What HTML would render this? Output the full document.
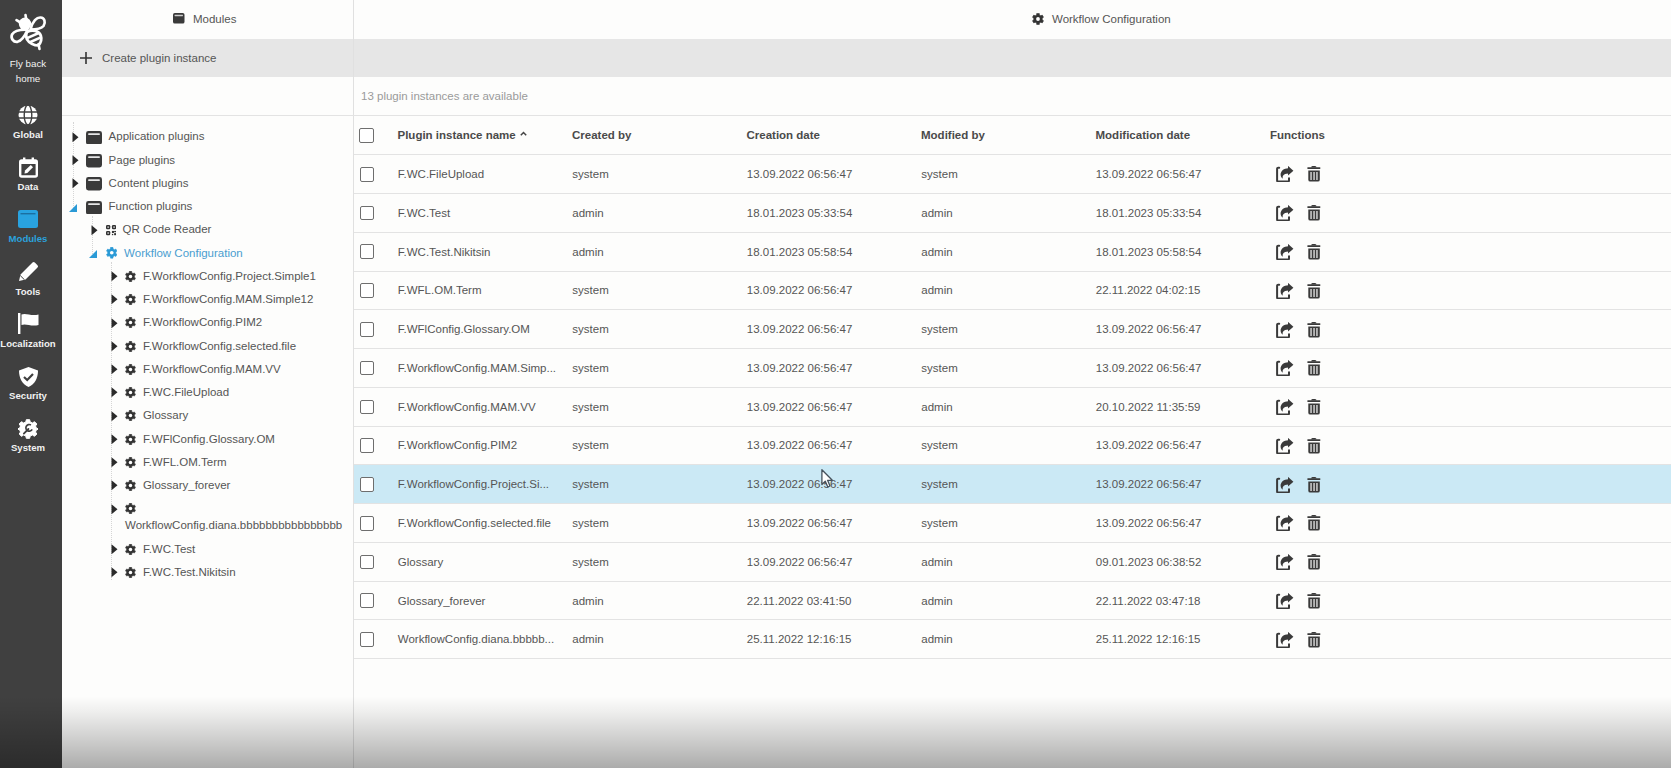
<!DOCTYPE html><html><head><meta charset="utf-8"><style>
*{margin:0;padding:0;box-sizing:border-box}
html,body{width:1671px;height:768px;overflow:hidden;background:#fdfdfc;font-family:"Liberation Sans",sans-serif;font-size:11.5px;color:#555}
.a{position:absolute}
.t{position:absolute;white-space:nowrap;line-height:14px}
#side{position:absolute;left:0;top:0;width:62px;height:768px;background:#404040}
.sl{position:absolute;left:0;width:56px;text-align:center;color:#f2f2f2;font-weight:bold;font-size:9.6px;line-height:12px;white-space:nowrap}
.hl{position:absolute;height:1px;background:#e3e3e3}
.cb{position:absolute;width:14.5px;height:14.8px;border:1.8px solid #6e6e6e;border-radius:2px;background:#fff}
.th{font-weight:bold;color:#4a4a4a}
svg{display:block}
</style></head><body>

<div id="side">
<svg class="a" style="left:5px;top:8px" width="48" height="48" viewBox="0 0 48 48">
<defs><clipPath id="bc"><path d="M22 24 C 27 21.5, 34 22.5, 35.8 27.5 C 37 31, 36 34.5, 33.5 37.5 C 29 37.5, 24 35, 21.8 31 C 20.8 28.5, 20.8 26, 22 24Z"/></clipPath></defs>
<g fill="none" stroke="#fff" stroke-width="2.7" stroke-linejoin="round">
<path d="M25.5 21.5 C 27.5 13, 32 9.2, 35.5 9.5 C 39.5 9.8, 41 14, 38.5 18 C 36 21, 30 21.5, 25.5 21.5 Z"/>
<path d="M22.5 21.8 C 16 21.5, 9.5 22.5, 7 26.5 C 5.5 30.5, 8.5 34.5, 12.5 33.8 C 16 33, 19.5 29, 22.5 21.8 Z"/>
<path d="M22 24 C 27 21.5, 34 22.5, 35.8 27.5 C 37 31, 36 34.5, 33.5 37.5 C 29 37.5, 24 35, 21.8 31 C 20.8 28.5, 20.8 26, 22 24Z"/>
</g>
<g clip-path="url(#bc)" stroke="#fff" stroke-width="2.6"><path d="M20 31 L37 23.5"/><path d="M22 35.5 L38 28.5"/></g>
<path d="M33.5 36 L34.5 41" stroke="#fff" stroke-width="2.6" stroke-linecap="round"/>
<circle cx="20" cy="15.8" r="6.2" fill="#fff"/>
<path d="M20.5 7 L21.2 11 M11.5 12.2 L15.5 14.5" stroke="#fff" stroke-width="2.6" stroke-linecap="round"/>
</svg>
<div class="sl" style="top:57.8px;font-weight:normal;font-size:9.8px">Fly back</div><div class="sl" style="top:72.5px;font-weight:normal;font-size:9.8px">home</div>
<svg class="a" style="left:18px;top:105px" width="20" height="20" viewBox="0 0 20 20"><circle cx="10" cy="10" r="9.5" fill="#fff"/><g stroke="#404040" stroke-width="1.4" fill="none"><path d="M0 7H20M0 13H20"/><ellipse cx="10" cy="10" rx="3.8" ry="10"/></g></svg>
<div class="sl" style="top:129px">Global</div>
<svg class="a" style="left:19px;top:157px" width="19" height="21" viewBox="0 0 19 21"><rect x="1.2" y="3.5" width="16.6" height="16" rx="1.5" fill="none" stroke="#fff" stroke-width="2.4"/><rect x="1" y="3" width="17" height="4" fill="#fff"/><rect x="4" y="0.5" width="2.4" height="4" fill="#fff"/><rect x="12.6" y="0.5" width="2.4" height="4" fill="#fff"/><path d="M5.5 16.5L6 13.5L11.8 8L14 10.2L8.3 16z" fill="#fff"/></svg>
<div class="sl" style="top:181px">Data</div>
<svg class="a" style="left:18px;top:210px" width="20" height="18" viewBox="0 0 20 18"><rect x="0" y="0" width="20" height="18" rx="2.5" fill="#29a3e0"/><rect x="2.5" y="3" width="15" height="1.4" fill="#1b6fa0"/></svg>
<div class="sl" style="top:233px;color:#2ba2dd">Modules</div>
<svg class="a" style="left:18px;top:261px" width="21" height="21" viewBox="0 0 21 21"><path d="M1 20L2.5 13.5L14.5 1.5A1.6 1.6 0 0 1 16.8 1.5L19.5 4.2A1.6 1.6 0 0 1 19.5 6.5L7.5 18.5z" fill="#fff"/><path d="M2.2 14.5L6.5 18.8" stroke="#404040" stroke-width="1"/></svg>
<div class="sl" style="top:286px">Tools</div>
<svg class="a" style="left:18px;top:313px" width="21" height="21" viewBox="0 0 21 21"><rect x="0" y="0" width="2.4" height="21" fill="#fff"/><path d="M3.5 1.5C8 -0.5 13 3.5 20.5 1.5V12C13 14 8 10 3.5 12z" fill="#fff"/></svg>
<div class="sl" style="top:338px">Localization</div>
<svg class="a" style="left:19px;top:367px" width="19" height="20" viewBox="0 0 19 20"><path d="M9.5 0L19 3.5C19 11 16 17 9.5 20C3 17 0 11 0 3.5z" fill="#fff"/><path d="M5 10L8.2 13L14 7" fill="none" stroke="#404040" stroke-width="2.2"/></svg>
<div class="sl" style="top:390px">Security</div>
<svg class="a" style="left:18px;top:419px" width="20" height="20" viewBox="0 0 24 24"><path fill="#fff" stroke="#fff" stroke-width="1.2" stroke-linejoin="round" d="M10 0.8H14L14.6 3.6L17.4 4.8L19.8 3.2L22.6 6L21 8.4L22.2 11.2L25 11.8V12.2L22.2 12.8L21 15.6L22.6 18L19.8 20.8L17.4 19.2L14.6 20.4L14 23.2H10L9.4 20.4L6.6 19.2L4.2 20.8L1.4 18L3 15.6L1.8 12.8L-1 12.2V11.8L1.8 11.2L3 8.4L1.4 6L4.2 3.2L6.6 4.8L9.4 3.6Z"/><path d="M7 17.5L12.5 12" stroke="#404040" stroke-width="2.2" stroke-linecap="round"/><path d="M15.5 7.2A4 4 0 1 0 17 12.5" fill="none" stroke="#404040" stroke-width="2"/></svg>
<div class="sl" style="top:442px">System</div>
</div>
<div class="a" style="left:173.3px;top:13.4px"><svg viewBox="0 0 16 13.5" width="11.5" height="10.5" preserveAspectRatio="none"><rect x="0" y="0" width="16" height="13.5" rx="2.4" fill="#3a3a3a"/><rect x="2.2" y="2.2" width="11.6" height="1.9" rx="0.5" fill="#cfcfcf"/></svg></div>
<div class="t" style="left:193px;top:12px;color:#555">Modules</div>
<div class="a" style="left:1032px;top:13px"><svg class="gear" viewBox="0 0 24 24" width="12" height="12"><path fill="#333" stroke="#333" stroke-width="1.2" stroke-linejoin="round" d="M9.26 3.85L9.49 0.78L14.51 0.78L14.74 3.85L17.69 5.55L20.47 4.22L22.97 8.56L20.43 10.30L20.43 13.70L22.97 15.44L20.47 19.78L17.69 18.45L14.74 20.15L14.51 23.22L9.49 23.22L9.26 20.15L6.31 18.45L3.53 19.78L1.03 15.44L3.57 13.70L3.57 10.30L1.03 8.56L3.53 4.22L6.31 5.55Z"/><circle cx="12" cy="12" r="3.8" fill="#fff"/></svg></div>
<div class="t" style="left:1052px;top:12px;color:#555">Workflow Configuration</div>
<div class="a" style="left:62px;top:39px;width:1609px;height:38px;background:#e6e6e6"></div>
<svg class="a" style="left:80px;top:52px" width="12" height="12" viewBox="0 0 12 12"><path d="M6 0V12M0 6H12" stroke="#333" stroke-width="1.6"/></svg>
<div class="t" style="left:102px;top:51px;color:#555">Create plugin instance</div>
<div class="a" style="left:353px;top:0;width:1px;height:768px;background:#e0e0e0"></div>
<div class="t" style="left:361px;top:89px;color:#9a9a9a">13 plugin instances are available</div>
<div class="hl" style="left:62px;top:115px;width:1609px"></div>
<div class="cb" style="left:359px;top:127.9px"></div>
<div class="t th" style="left:397.5px;top:127.9px">Plugin instance name</div>
<div class="t th" style="left:572.0px;top:127.9px">Created by</div>
<div class="t th" style="left:746.5px;top:127.9px">Creation date</div>
<div class="t th" style="left:921.0px;top:127.9px">Modified by</div>
<div class="t th" style="left:1095.5px;top:127.9px">Modification date</div>
<div class="t th" style="left:1270.0px;top:127.9px">Functions</div>
<svg class="a" style="left:520px;top:130.9px" width="7" height="5" viewBox="0 0 7 5"><path d="M0.8 4.2L3.5 1.5L6.2 4.2" fill="none" stroke="#444" stroke-width="1.5"/></svg>
<div class="hl" style="left:354px;top:192.97px;width:1317px"></div>
<div class="cb" style="left:359.5px;top:166.9px"></div>
<div class="t" style="left:397.8px;top:167.0px">F.WC.FileUpload</div>
<div class="t" style="left:572.3px;top:167.0px">system</div>
<div class="t" style="left:746.8px;top:167.0px">13.09.2022 06:56:47</div>
<div class="t" style="left:921.3px;top:167.0px">system</div>
<div class="t" style="left:1095.8px;top:167.0px">13.09.2022 06:56:47</div>
<div class="a" style="left:1276px;top:166.4px"><svg viewBox="0 0 18 16" width="18" height="16"><path d="M3.2 1.7H2.2A1.1 1.1 0 0 0 1.1 2.8V14.4A1.1 1.1 0 0 0 2.2 15.5H11.9A1.1 1.1 0 0 0 13 14.4V12.3" fill="none" stroke="#3a3a3a" stroke-width="2" stroke-linecap="round"/><path d="M12 -0.1L17.4 4.7L12 9.4z" fill="#3a3a3a"/><path d="M12.3 2.2C7.8 2.2 4.6 5 4.6 8.6C4.6 10.8 5.6 12.2 7 12.7C6.5 11.8 6.5 10.6 7.2 9.6C8 8.3 9.8 7.4 12.3 7.4Z" fill="#3a3a3a"/></svg></div>
<div class="a" style="left:1306.7px;top:166.4px"><svg viewBox="0 0 14 16" width="14" height="16"><path d="M4.2 1.4C4.2 0.3 5 -0.1 6.8 -0.1C8.6 -0.1 9.4 0.3 9.4 1.4z" fill="#3a3a3a"/><rect x="0.3" y="1.2" width="13.1" height="1.7" rx="0.6" fill="#3a3a3a"/><path d="M1.3 4.5H12.8V13.7A1.9 1.9 0 0 1 10.9 15.6H3.2A1.9 1.9 0 0 1 1.3 13.7z" fill="#3a3a3a"/><g fill="#e8e8e8"><rect x="3.4" y="6" width="1.3" height="8"/><rect x="6.4" y="6" width="1.3" height="8"/><rect x="9.3" y="6" width="1.3" height="8"/></g></svg></div>
<div class="hl" style="left:354px;top:231.74px;width:1317px"></div>
<div class="cb" style="left:359.5px;top:205.7px"></div>
<div class="t" style="left:397.8px;top:205.8px">F.WC.Test</div>
<div class="t" style="left:572.3px;top:205.8px">admin</div>
<div class="t" style="left:746.8px;top:205.8px">18.01.2023 05:33:54</div>
<div class="t" style="left:921.3px;top:205.8px">admin</div>
<div class="t" style="left:1095.8px;top:205.8px">18.01.2023 05:33:54</div>
<div class="a" style="left:1276px;top:205.2px"><svg viewBox="0 0 18 16" width="18" height="16"><path d="M3.2 1.7H2.2A1.1 1.1 0 0 0 1.1 2.8V14.4A1.1 1.1 0 0 0 2.2 15.5H11.9A1.1 1.1 0 0 0 13 14.4V12.3" fill="none" stroke="#3a3a3a" stroke-width="2" stroke-linecap="round"/><path d="M12 -0.1L17.4 4.7L12 9.4z" fill="#3a3a3a"/><path d="M12.3 2.2C7.8 2.2 4.6 5 4.6 8.6C4.6 10.8 5.6 12.2 7 12.7C6.5 11.8 6.5 10.6 7.2 9.6C8 8.3 9.8 7.4 12.3 7.4Z" fill="#3a3a3a"/></svg></div>
<div class="a" style="left:1306.7px;top:205.2px"><svg viewBox="0 0 14 16" width="14" height="16"><path d="M4.2 1.4C4.2 0.3 5 -0.1 6.8 -0.1C8.6 -0.1 9.4 0.3 9.4 1.4z" fill="#3a3a3a"/><rect x="0.3" y="1.2" width="13.1" height="1.7" rx="0.6" fill="#3a3a3a"/><path d="M1.3 4.5H12.8V13.7A1.9 1.9 0 0 1 10.9 15.6H3.2A1.9 1.9 0 0 1 1.3 13.7z" fill="#3a3a3a"/><g fill="#e8e8e8"><rect x="3.4" y="6" width="1.3" height="8"/><rect x="6.4" y="6" width="1.3" height="8"/><rect x="9.3" y="6" width="1.3" height="8"/></g></svg></div>
<div class="hl" style="left:354px;top:270.51px;width:1317px"></div>
<div class="cb" style="left:359.5px;top:244.4px"></div>
<div class="t" style="left:397.8px;top:244.5px">F.WC.Test.Nikitsin</div>
<div class="t" style="left:572.3px;top:244.5px">admin</div>
<div class="t" style="left:746.8px;top:244.5px">18.01.2023 05:58:54</div>
<div class="t" style="left:921.3px;top:244.5px">admin</div>
<div class="t" style="left:1095.8px;top:244.5px">18.01.2023 05:58:54</div>
<div class="a" style="left:1276px;top:243.9px"><svg viewBox="0 0 18 16" width="18" height="16"><path d="M3.2 1.7H2.2A1.1 1.1 0 0 0 1.1 2.8V14.4A1.1 1.1 0 0 0 2.2 15.5H11.9A1.1 1.1 0 0 0 13 14.4V12.3" fill="none" stroke="#3a3a3a" stroke-width="2" stroke-linecap="round"/><path d="M12 -0.1L17.4 4.7L12 9.4z" fill="#3a3a3a"/><path d="M12.3 2.2C7.8 2.2 4.6 5 4.6 8.6C4.6 10.8 5.6 12.2 7 12.7C6.5 11.8 6.5 10.6 7.2 9.6C8 8.3 9.8 7.4 12.3 7.4Z" fill="#3a3a3a"/></svg></div>
<div class="a" style="left:1306.7px;top:243.9px"><svg viewBox="0 0 14 16" width="14" height="16"><path d="M4.2 1.4C4.2 0.3 5 -0.1 6.8 -0.1C8.6 -0.1 9.4 0.3 9.4 1.4z" fill="#3a3a3a"/><rect x="0.3" y="1.2" width="13.1" height="1.7" rx="0.6" fill="#3a3a3a"/><path d="M1.3 4.5H12.8V13.7A1.9 1.9 0 0 1 10.9 15.6H3.2A1.9 1.9 0 0 1 1.3 13.7z" fill="#3a3a3a"/><g fill="#e8e8e8"><rect x="3.4" y="6" width="1.3" height="8"/><rect x="6.4" y="6" width="1.3" height="8"/><rect x="9.3" y="6" width="1.3" height="8"/></g></svg></div>
<div class="hl" style="left:354px;top:309.28px;width:1317px"></div>
<div class="cb" style="left:359.5px;top:283.2px"></div>
<div class="t" style="left:397.8px;top:283.3px">F.WFL.OM.Term</div>
<div class="t" style="left:572.3px;top:283.3px">system</div>
<div class="t" style="left:746.8px;top:283.3px">13.09.2022 06:56:47</div>
<div class="t" style="left:921.3px;top:283.3px">admin</div>
<div class="t" style="left:1095.8px;top:283.3px">22.11.2022 04:02:15</div>
<div class="a" style="left:1276px;top:282.7px"><svg viewBox="0 0 18 16" width="18" height="16"><path d="M3.2 1.7H2.2A1.1 1.1 0 0 0 1.1 2.8V14.4A1.1 1.1 0 0 0 2.2 15.5H11.9A1.1 1.1 0 0 0 13 14.4V12.3" fill="none" stroke="#3a3a3a" stroke-width="2" stroke-linecap="round"/><path d="M12 -0.1L17.4 4.7L12 9.4z" fill="#3a3a3a"/><path d="M12.3 2.2C7.8 2.2 4.6 5 4.6 8.6C4.6 10.8 5.6 12.2 7 12.7C6.5 11.8 6.5 10.6 7.2 9.6C8 8.3 9.8 7.4 12.3 7.4Z" fill="#3a3a3a"/></svg></div>
<div class="a" style="left:1306.7px;top:282.7px"><svg viewBox="0 0 14 16" width="14" height="16"><path d="M4.2 1.4C4.2 0.3 5 -0.1 6.8 -0.1C8.6 -0.1 9.4 0.3 9.4 1.4z" fill="#3a3a3a"/><rect x="0.3" y="1.2" width="13.1" height="1.7" rx="0.6" fill="#3a3a3a"/><path d="M1.3 4.5H12.8V13.7A1.9 1.9 0 0 1 10.9 15.6H3.2A1.9 1.9 0 0 1 1.3 13.7z" fill="#3a3a3a"/><g fill="#e8e8e8"><rect x="3.4" y="6" width="1.3" height="8"/><rect x="6.4" y="6" width="1.3" height="8"/><rect x="9.3" y="6" width="1.3" height="8"/></g></svg></div>
<div class="hl" style="left:354px;top:348.05px;width:1317px"></div>
<div class="cb" style="left:359.5px;top:322.0px"></div>
<div class="t" style="left:397.8px;top:322.1px">F.WFlConfig.Glossary.OM</div>
<div class="t" style="left:572.3px;top:322.1px">system</div>
<div class="t" style="left:746.8px;top:322.1px">13.09.2022 06:56:47</div>
<div class="t" style="left:921.3px;top:322.1px">system</div>
<div class="t" style="left:1095.8px;top:322.1px">13.09.2022 06:56:47</div>
<div class="a" style="left:1276px;top:321.5px"><svg viewBox="0 0 18 16" width="18" height="16"><path d="M3.2 1.7H2.2A1.1 1.1 0 0 0 1.1 2.8V14.4A1.1 1.1 0 0 0 2.2 15.5H11.9A1.1 1.1 0 0 0 13 14.4V12.3" fill="none" stroke="#3a3a3a" stroke-width="2" stroke-linecap="round"/><path d="M12 -0.1L17.4 4.7L12 9.4z" fill="#3a3a3a"/><path d="M12.3 2.2C7.8 2.2 4.6 5 4.6 8.6C4.6 10.8 5.6 12.2 7 12.7C6.5 11.8 6.5 10.6 7.2 9.6C8 8.3 9.8 7.4 12.3 7.4Z" fill="#3a3a3a"/></svg></div>
<div class="a" style="left:1306.7px;top:321.5px"><svg viewBox="0 0 14 16" width="14" height="16"><path d="M4.2 1.4C4.2 0.3 5 -0.1 6.8 -0.1C8.6 -0.1 9.4 0.3 9.4 1.4z" fill="#3a3a3a"/><rect x="0.3" y="1.2" width="13.1" height="1.7" rx="0.6" fill="#3a3a3a"/><path d="M1.3 4.5H12.8V13.7A1.9 1.9 0 0 1 10.9 15.6H3.2A1.9 1.9 0 0 1 1.3 13.7z" fill="#3a3a3a"/><g fill="#e8e8e8"><rect x="3.4" y="6" width="1.3" height="8"/><rect x="6.4" y="6" width="1.3" height="8"/><rect x="9.3" y="6" width="1.3" height="8"/></g></svg></div>
<div class="hl" style="left:354px;top:386.82px;width:1317px"></div>
<div class="cb" style="left:359.5px;top:360.7px"></div>
<div class="t" style="left:397.8px;top:360.8px">F.WorkflowConfig.MAM.Simp...</div>
<div class="t" style="left:572.3px;top:360.8px">system</div>
<div class="t" style="left:746.8px;top:360.8px">13.09.2022 06:56:47</div>
<div class="t" style="left:921.3px;top:360.8px">system</div>
<div class="t" style="left:1095.8px;top:360.8px">13.09.2022 06:56:47</div>
<div class="a" style="left:1276px;top:360.2px"><svg viewBox="0 0 18 16" width="18" height="16"><path d="M3.2 1.7H2.2A1.1 1.1 0 0 0 1.1 2.8V14.4A1.1 1.1 0 0 0 2.2 15.5H11.9A1.1 1.1 0 0 0 13 14.4V12.3" fill="none" stroke="#3a3a3a" stroke-width="2" stroke-linecap="round"/><path d="M12 -0.1L17.4 4.7L12 9.4z" fill="#3a3a3a"/><path d="M12.3 2.2C7.8 2.2 4.6 5 4.6 8.6C4.6 10.8 5.6 12.2 7 12.7C6.5 11.8 6.5 10.6 7.2 9.6C8 8.3 9.8 7.4 12.3 7.4Z" fill="#3a3a3a"/></svg></div>
<div class="a" style="left:1306.7px;top:360.2px"><svg viewBox="0 0 14 16" width="14" height="16"><path d="M4.2 1.4C4.2 0.3 5 -0.1 6.8 -0.1C8.6 -0.1 9.4 0.3 9.4 1.4z" fill="#3a3a3a"/><rect x="0.3" y="1.2" width="13.1" height="1.7" rx="0.6" fill="#3a3a3a"/><path d="M1.3 4.5H12.8V13.7A1.9 1.9 0 0 1 10.9 15.6H3.2A1.9 1.9 0 0 1 1.3 13.7z" fill="#3a3a3a"/><g fill="#e8e8e8"><rect x="3.4" y="6" width="1.3" height="8"/><rect x="6.4" y="6" width="1.3" height="8"/><rect x="9.3" y="6" width="1.3" height="8"/></g></svg></div>
<div class="hl" style="left:354px;top:425.59px;width:1317px"></div>
<div class="cb" style="left:359.5px;top:399.5px"></div>
<div class="t" style="left:397.8px;top:399.6px">F.WorkflowConfig.MAM.VV</div>
<div class="t" style="left:572.3px;top:399.6px">system</div>
<div class="t" style="left:746.8px;top:399.6px">13.09.2022 06:56:47</div>
<div class="t" style="left:921.3px;top:399.6px">admin</div>
<div class="t" style="left:1095.8px;top:399.6px">20.10.2022 11:35:59</div>
<div class="a" style="left:1276px;top:399.0px"><svg viewBox="0 0 18 16" width="18" height="16"><path d="M3.2 1.7H2.2A1.1 1.1 0 0 0 1.1 2.8V14.4A1.1 1.1 0 0 0 2.2 15.5H11.9A1.1 1.1 0 0 0 13 14.4V12.3" fill="none" stroke="#3a3a3a" stroke-width="2" stroke-linecap="round"/><path d="M12 -0.1L17.4 4.7L12 9.4z" fill="#3a3a3a"/><path d="M12.3 2.2C7.8 2.2 4.6 5 4.6 8.6C4.6 10.8 5.6 12.2 7 12.7C6.5 11.8 6.5 10.6 7.2 9.6C8 8.3 9.8 7.4 12.3 7.4Z" fill="#3a3a3a"/></svg></div>
<div class="a" style="left:1306.7px;top:399.0px"><svg viewBox="0 0 14 16" width="14" height="16"><path d="M4.2 1.4C4.2 0.3 5 -0.1 6.8 -0.1C8.6 -0.1 9.4 0.3 9.4 1.4z" fill="#3a3a3a"/><rect x="0.3" y="1.2" width="13.1" height="1.7" rx="0.6" fill="#3a3a3a"/><path d="M1.3 4.5H12.8V13.7A1.9 1.9 0 0 1 10.9 15.6H3.2A1.9 1.9 0 0 1 1.3 13.7z" fill="#3a3a3a"/><g fill="#e8e8e8"><rect x="3.4" y="6" width="1.3" height="8"/><rect x="6.4" y="6" width="1.3" height="8"/><rect x="9.3" y="6" width="1.3" height="8"/></g></svg></div>
<div class="hl" style="left:354px;top:464.36px;width:1317px"></div>
<div class="cb" style="left:359.5px;top:438.3px"></div>
<div class="t" style="left:397.8px;top:438.4px">F.WorkflowConfig.PIM2</div>
<div class="t" style="left:572.3px;top:438.4px">system</div>
<div class="t" style="left:746.8px;top:438.4px">13.09.2022 06:56:47</div>
<div class="t" style="left:921.3px;top:438.4px">system</div>
<div class="t" style="left:1095.8px;top:438.4px">13.09.2022 06:56:47</div>
<div class="a" style="left:1276px;top:437.8px"><svg viewBox="0 0 18 16" width="18" height="16"><path d="M3.2 1.7H2.2A1.1 1.1 0 0 0 1.1 2.8V14.4A1.1 1.1 0 0 0 2.2 15.5H11.9A1.1 1.1 0 0 0 13 14.4V12.3" fill="none" stroke="#3a3a3a" stroke-width="2" stroke-linecap="round"/><path d="M12 -0.1L17.4 4.7L12 9.4z" fill="#3a3a3a"/><path d="M12.3 2.2C7.8 2.2 4.6 5 4.6 8.6C4.6 10.8 5.6 12.2 7 12.7C6.5 11.8 6.5 10.6 7.2 9.6C8 8.3 9.8 7.4 12.3 7.4Z" fill="#3a3a3a"/></svg></div>
<div class="a" style="left:1306.7px;top:437.8px"><svg viewBox="0 0 14 16" width="14" height="16"><path d="M4.2 1.4C4.2 0.3 5 -0.1 6.8 -0.1C8.6 -0.1 9.4 0.3 9.4 1.4z" fill="#3a3a3a"/><rect x="0.3" y="1.2" width="13.1" height="1.7" rx="0.6" fill="#3a3a3a"/><path d="M1.3 4.5H12.8V13.7A1.9 1.9 0 0 1 10.9 15.6H3.2A1.9 1.9 0 0 1 1.3 13.7z" fill="#3a3a3a"/><g fill="#e8e8e8"><rect x="3.4" y="6" width="1.3" height="8"/><rect x="6.4" y="6" width="1.3" height="8"/><rect x="9.3" y="6" width="1.3" height="8"/></g></svg></div>
<div class="a" style="left:354px;top:464.86px;width:1317px;height:38.77px;background:#cbe9f5"></div>
<div class="hl" style="left:354px;top:503.13px;width:1317px"></div>
<div class="cb" style="left:359.5px;top:477.0px"></div>
<div class="t" style="left:397.8px;top:477.1px">F.WorkflowConfig.Project.Si...</div>
<div class="t" style="left:572.3px;top:477.1px">system</div>
<div class="t" style="left:746.8px;top:477.1px">13.09.2022 06:56:47</div>
<div class="t" style="left:921.3px;top:477.1px">system</div>
<div class="t" style="left:1095.8px;top:477.1px">13.09.2022 06:56:47</div>
<div class="a" style="left:1276px;top:476.5px"><svg viewBox="0 0 18 16" width="18" height="16"><path d="M3.2 1.7H2.2A1.1 1.1 0 0 0 1.1 2.8V14.4A1.1 1.1 0 0 0 2.2 15.5H11.9A1.1 1.1 0 0 0 13 14.4V12.3" fill="none" stroke="#3a3a3a" stroke-width="2" stroke-linecap="round"/><path d="M12 -0.1L17.4 4.7L12 9.4z" fill="#3a3a3a"/><path d="M12.3 2.2C7.8 2.2 4.6 5 4.6 8.6C4.6 10.8 5.6 12.2 7 12.7C6.5 11.8 6.5 10.6 7.2 9.6C8 8.3 9.8 7.4 12.3 7.4Z" fill="#3a3a3a"/></svg></div>
<div class="a" style="left:1306.7px;top:476.5px"><svg viewBox="0 0 14 16" width="14" height="16"><path d="M4.2 1.4C4.2 0.3 5 -0.1 6.8 -0.1C8.6 -0.1 9.4 0.3 9.4 1.4z" fill="#3a3a3a"/><rect x="0.3" y="1.2" width="13.1" height="1.7" rx="0.6" fill="#3a3a3a"/><path d="M1.3 4.5H12.8V13.7A1.9 1.9 0 0 1 10.9 15.6H3.2A1.9 1.9 0 0 1 1.3 13.7z" fill="#3a3a3a"/><g fill="#e8e8e8"><rect x="3.4" y="6" width="1.3" height="8"/><rect x="6.4" y="6" width="1.3" height="8"/><rect x="9.3" y="6" width="1.3" height="8"/></g></svg></div>
<div class="hl" style="left:354px;top:541.90px;width:1317px"></div>
<div class="cb" style="left:359.5px;top:515.8px"></div>
<div class="t" style="left:397.8px;top:515.9px">F.WorkflowConfig.selected.file</div>
<div class="t" style="left:572.3px;top:515.9px">system</div>
<div class="t" style="left:746.8px;top:515.9px">13.09.2022 06:56:47</div>
<div class="t" style="left:921.3px;top:515.9px">system</div>
<div class="t" style="left:1095.8px;top:515.9px">13.09.2022 06:56:47</div>
<div class="a" style="left:1276px;top:515.3px"><svg viewBox="0 0 18 16" width="18" height="16"><path d="M3.2 1.7H2.2A1.1 1.1 0 0 0 1.1 2.8V14.4A1.1 1.1 0 0 0 2.2 15.5H11.9A1.1 1.1 0 0 0 13 14.4V12.3" fill="none" stroke="#3a3a3a" stroke-width="2" stroke-linecap="round"/><path d="M12 -0.1L17.4 4.7L12 9.4z" fill="#3a3a3a"/><path d="M12.3 2.2C7.8 2.2 4.6 5 4.6 8.6C4.6 10.8 5.6 12.2 7 12.7C6.5 11.8 6.5 10.6 7.2 9.6C8 8.3 9.8 7.4 12.3 7.4Z" fill="#3a3a3a"/></svg></div>
<div class="a" style="left:1306.7px;top:515.3px"><svg viewBox="0 0 14 16" width="14" height="16"><path d="M4.2 1.4C4.2 0.3 5 -0.1 6.8 -0.1C8.6 -0.1 9.4 0.3 9.4 1.4z" fill="#3a3a3a"/><rect x="0.3" y="1.2" width="13.1" height="1.7" rx="0.6" fill="#3a3a3a"/><path d="M1.3 4.5H12.8V13.7A1.9 1.9 0 0 1 10.9 15.6H3.2A1.9 1.9 0 0 1 1.3 13.7z" fill="#3a3a3a"/><g fill="#e8e8e8"><rect x="3.4" y="6" width="1.3" height="8"/><rect x="6.4" y="6" width="1.3" height="8"/><rect x="9.3" y="6" width="1.3" height="8"/></g></svg></div>
<div class="hl" style="left:354px;top:580.67px;width:1317px"></div>
<div class="cb" style="left:359.5px;top:554.6px"></div>
<div class="t" style="left:397.8px;top:554.7px">Glossary</div>
<div class="t" style="left:572.3px;top:554.7px">system</div>
<div class="t" style="left:746.8px;top:554.7px">13.09.2022 06:56:47</div>
<div class="t" style="left:921.3px;top:554.7px">admin</div>
<div class="t" style="left:1095.8px;top:554.7px">09.01.2023 06:38:52</div>
<div class="a" style="left:1276px;top:554.1px"><svg viewBox="0 0 18 16" width="18" height="16"><path d="M3.2 1.7H2.2A1.1 1.1 0 0 0 1.1 2.8V14.4A1.1 1.1 0 0 0 2.2 15.5H11.9A1.1 1.1 0 0 0 13 14.4V12.3" fill="none" stroke="#3a3a3a" stroke-width="2" stroke-linecap="round"/><path d="M12 -0.1L17.4 4.7L12 9.4z" fill="#3a3a3a"/><path d="M12.3 2.2C7.8 2.2 4.6 5 4.6 8.6C4.6 10.8 5.6 12.2 7 12.7C6.5 11.8 6.5 10.6 7.2 9.6C8 8.3 9.8 7.4 12.3 7.4Z" fill="#3a3a3a"/></svg></div>
<div class="a" style="left:1306.7px;top:554.1px"><svg viewBox="0 0 14 16" width="14" height="16"><path d="M4.2 1.4C4.2 0.3 5 -0.1 6.8 -0.1C8.6 -0.1 9.4 0.3 9.4 1.4z" fill="#3a3a3a"/><rect x="0.3" y="1.2" width="13.1" height="1.7" rx="0.6" fill="#3a3a3a"/><path d="M1.3 4.5H12.8V13.7A1.9 1.9 0 0 1 10.9 15.6H3.2A1.9 1.9 0 0 1 1.3 13.7z" fill="#3a3a3a"/><g fill="#e8e8e8"><rect x="3.4" y="6" width="1.3" height="8"/><rect x="6.4" y="6" width="1.3" height="8"/><rect x="9.3" y="6" width="1.3" height="8"/></g></svg></div>
<div class="hl" style="left:354px;top:619.44px;width:1317px"></div>
<div class="cb" style="left:359.5px;top:593.4px"></div>
<div class="t" style="left:397.8px;top:593.5px">Glossary_forever</div>
<div class="t" style="left:572.3px;top:593.5px">admin</div>
<div class="t" style="left:746.8px;top:593.5px">22.11.2022 03:41:50</div>
<div class="t" style="left:921.3px;top:593.5px">admin</div>
<div class="t" style="left:1095.8px;top:593.5px">22.11.2022 03:47:18</div>
<div class="a" style="left:1276px;top:592.9px"><svg viewBox="0 0 18 16" width="18" height="16"><path d="M3.2 1.7H2.2A1.1 1.1 0 0 0 1.1 2.8V14.4A1.1 1.1 0 0 0 2.2 15.5H11.9A1.1 1.1 0 0 0 13 14.4V12.3" fill="none" stroke="#3a3a3a" stroke-width="2" stroke-linecap="round"/><path d="M12 -0.1L17.4 4.7L12 9.4z" fill="#3a3a3a"/><path d="M12.3 2.2C7.8 2.2 4.6 5 4.6 8.6C4.6 10.8 5.6 12.2 7 12.7C6.5 11.8 6.5 10.6 7.2 9.6C8 8.3 9.8 7.4 12.3 7.4Z" fill="#3a3a3a"/></svg></div>
<div class="a" style="left:1306.7px;top:592.9px"><svg viewBox="0 0 14 16" width="14" height="16"><path d="M4.2 1.4C4.2 0.3 5 -0.1 6.8 -0.1C8.6 -0.1 9.4 0.3 9.4 1.4z" fill="#3a3a3a"/><rect x="0.3" y="1.2" width="13.1" height="1.7" rx="0.6" fill="#3a3a3a"/><path d="M1.3 4.5H12.8V13.7A1.9 1.9 0 0 1 10.9 15.6H3.2A1.9 1.9 0 0 1 1.3 13.7z" fill="#3a3a3a"/><g fill="#e8e8e8"><rect x="3.4" y="6" width="1.3" height="8"/><rect x="6.4" y="6" width="1.3" height="8"/><rect x="9.3" y="6" width="1.3" height="8"/></g></svg></div>
<div class="hl" style="left:354px;top:658.21px;width:1317px"></div>
<div class="cb" style="left:359.5px;top:632.1px"></div>
<div class="t" style="left:397.8px;top:632.2px">WorkflowConfig.diana.bbbbb...</div>
<div class="t" style="left:572.3px;top:632.2px">admin</div>
<div class="t" style="left:746.8px;top:632.2px">25.11.2022 12:16:15</div>
<div class="t" style="left:921.3px;top:632.2px">admin</div>
<div class="t" style="left:1095.8px;top:632.2px">25.11.2022 12:16:15</div>
<div class="a" style="left:1276px;top:631.6px"><svg viewBox="0 0 18 16" width="18" height="16"><path d="M3.2 1.7H2.2A1.1 1.1 0 0 0 1.1 2.8V14.4A1.1 1.1 0 0 0 2.2 15.5H11.9A1.1 1.1 0 0 0 13 14.4V12.3" fill="none" stroke="#3a3a3a" stroke-width="2" stroke-linecap="round"/><path d="M12 -0.1L17.4 4.7L12 9.4z" fill="#3a3a3a"/><path d="M12.3 2.2C7.8 2.2 4.6 5 4.6 8.6C4.6 10.8 5.6 12.2 7 12.7C6.5 11.8 6.5 10.6 7.2 9.6C8 8.3 9.8 7.4 12.3 7.4Z" fill="#3a3a3a"/></svg></div>
<div class="a" style="left:1306.7px;top:631.6px"><svg viewBox="0 0 14 16" width="14" height="16"><path d="M4.2 1.4C4.2 0.3 5 -0.1 6.8 -0.1C8.6 -0.1 9.4 0.3 9.4 1.4z" fill="#3a3a3a"/><rect x="0.3" y="1.2" width="13.1" height="1.7" rx="0.6" fill="#3a3a3a"/><path d="M1.3 4.5H12.8V13.7A1.9 1.9 0 0 1 10.9 15.6H3.2A1.9 1.9 0 0 1 1.3 13.7z" fill="#3a3a3a"/><g fill="#e8e8e8"><rect x="3.4" y="6" width="1.3" height="8"/><rect x="6.4" y="6" width="1.3" height="8"/><rect x="9.3" y="6" width="1.3" height="8"/></g></svg></div>
<div class="hl" style="left:354px;top:154px;width:1317px"></div>
<div class="t" style="left:125px;top:518.0px">WorkflowConfig.diana.bbbbbbbbbbbbbbbb</div>
<div class="a" style="left:73px;top:122px;width:0;height:88px;border-left:1px dotted #d5d5d5"></div>
<div class="a" style="left:92px;top:216px;width:0;height:40px;border-left:1px dotted #d5d5d5"></div>
<div class="a" style="left:111px;top:262px;width:0;height:318px;border-left:1px dotted #d5d5d5"></div>
<div class="a" style="left:72.1px;top:131.5px"><svg viewBox="0 0 7 10.5" width="7" height="10.5"><path d="M0.5 0.2L6.5 5.25L0.5 10.3z" fill="#2a2a2a"/></svg></div>
<div class="a" style="left:86px;top:130.8px"><svg viewBox="0 0 16 13.5" width="16" height="13.5" preserveAspectRatio="none"><rect x="0" y="0" width="16" height="13.5" rx="2.4" fill="#3a3a3a"/><rect x="2.2" y="2.2" width="11.6" height="1.9" rx="0.5" fill="#e6e6e6"/></svg></div>
<div class="t" style="left:108.6px;top:129.3px;color:#555">Application plugins</div>
<div class="a" style="left:72.1px;top:154.7px"><svg viewBox="0 0 7 10.5" width="7" height="10.5"><path d="M0.5 0.2L6.5 5.25L0.5 10.3z" fill="#2a2a2a"/></svg></div>
<div class="a" style="left:86px;top:154.0px"><svg viewBox="0 0 16 13.5" width="16" height="13.5" preserveAspectRatio="none"><rect x="0" y="0" width="16" height="13.5" rx="2.4" fill="#3a3a3a"/><rect x="2.2" y="2.2" width="11.6" height="1.9" rx="0.5" fill="#e6e6e6"/></svg></div>
<div class="t" style="left:108.6px;top:152.5px;color:#555">Page plugins</div>
<div class="a" style="left:72.1px;top:178.0px"><svg viewBox="0 0 7 10.5" width="7" height="10.5"><path d="M0.5 0.2L6.5 5.25L0.5 10.3z" fill="#2a2a2a"/></svg></div>
<div class="a" style="left:86px;top:177.3px"><svg viewBox="0 0 16 13.5" width="16" height="13.5" preserveAspectRatio="none"><rect x="0" y="0" width="16" height="13.5" rx="2.4" fill="#3a3a3a"/><rect x="2.2" y="2.2" width="11.6" height="1.9" rx="0.5" fill="#e6e6e6"/></svg></div>
<div class="t" style="left:108.6px;top:175.8px;color:#555">Content plugins</div>
<div class="a" style="left:69.4px;top:203.5px"><svg viewBox="0 0 8 8" width="8" height="8"><path d="M8 0V8H0z" fill="#2a9ad6"/></svg></div>
<div class="a" style="left:86px;top:200.5px"><svg viewBox="0 0 16 13.5" width="16" height="13.5" preserveAspectRatio="none"><rect x="0" y="0" width="16" height="13.5" rx="2.4" fill="#3a3a3a"/><rect x="2.2" y="2.2" width="11.6" height="1.9" rx="0.5" fill="#e6e6e6"/></svg></div>
<div class="t" style="left:108.6px;top:199.0px;color:#555">Function plugins</div>
<div class="a" style="left:91.4px;top:224.5px"><svg viewBox="0 0 7 10.5" width="7" height="10.5"><path d="M0.5 0.2L6.5 5.25L0.5 10.3z" fill="#2a2a2a"/></svg></div>
<div class="a" style="left:105.9px;top:225.4px"><svg viewBox="0 0 11 11" width="10.2" height="10.2"><g fill="#333"><rect x="0" y="0" width="4.6" height="4.6" rx="1.3"/><rect x="6.4" y="0" width="4.6" height="4.6" rx="1.3"/><rect x="0" y="6.4" width="4.6" height="4.6" rx="1.3"/><rect x="6.4" y="6.4" width="2.2" height="2.2"/><rect x="8.8" y="8.8" width="2.2" height="2.2"/><rect x="8.8" y="6.4" width="2.2" height="1.4"/><rect x="6.4" y="9.6" width="1.4" height="1.4"/></g><g fill="#fff"><rect x="1.6" y="1.6" width="1.4" height="1.4"/><rect x="8" y="1.6" width="1.4" height="1.4"/><rect x="1.6" y="8" width="1.4" height="1.4"/></g></svg></div>
<div class="t" style="left:122.6px;top:222.3px;color:#555">QR Code Reader</div>
<div class="a" style="left:88.7px;top:250.0px"><svg viewBox="0 0 8 8" width="8" height="8"><path d="M8 0V8H0z" fill="#2a9ad6"/></svg></div>
<div class="a" style="left:105.8px;top:247.2px"><svg class="gear" viewBox="0 0 24 24" width="11.5" height="11.5"><path fill="#2a9ad6" stroke="#2a9ad6" stroke-width="1.2" stroke-linejoin="round" d="M9.26 3.85L9.49 0.78L14.51 0.78L14.74 3.85L17.69 5.55L20.47 4.22L22.97 8.56L20.43 10.30L20.43 13.70L22.97 15.44L20.47 19.78L17.69 18.45L14.74 20.15L14.51 23.22L9.49 23.22L9.26 20.15L6.31 18.45L3.53 19.78L1.03 15.44L3.57 13.70L3.57 10.30L1.03 8.56L3.53 4.22L6.31 5.55Z"/><circle cx="12" cy="12" r="3.8" fill="#fff"/></svg></div>
<div class="t" style="left:124.1px;top:245.5px;color:#4a9dd0">Workflow Configuration</div>
<div class="a" style="left:110.7px;top:271.0px"><svg viewBox="0 0 7 10.5" width="7" height="10.5"><path d="M0.5 0.2L6.5 5.25L0.5 10.3z" fill="#2a2a2a"/></svg></div>
<div class="a" style="left:125.2px;top:270.8px"><svg class="gear" viewBox="0 0 24 24" width="11" height="11"><path fill="#333" stroke="#333" stroke-width="1.2" stroke-linejoin="round" d="M9.26 3.85L9.49 0.78L14.51 0.78L14.74 3.85L17.69 5.55L20.47 4.22L22.97 8.56L20.43 10.30L20.43 13.70L22.97 15.44L20.47 19.78L17.69 18.45L14.74 20.15L14.51 23.22L9.49 23.22L9.26 20.15L6.31 18.45L3.53 19.78L1.03 15.44L3.57 13.70L3.57 10.30L1.03 8.56L3.53 4.22L6.31 5.55Z"/><circle cx="12" cy="12" r="3.8" fill="#fff"/></svg></div>
<div class="t" style="left:142.9px;top:268.8px;color:#555">F.WorkflowConfig.Project.Simple1</div>
<div class="a" style="left:110.7px;top:294.2px"><svg viewBox="0 0 7 10.5" width="7" height="10.5"><path d="M0.5 0.2L6.5 5.25L0.5 10.3z" fill="#2a2a2a"/></svg></div>
<div class="a" style="left:125.2px;top:294.1px"><svg class="gear" viewBox="0 0 24 24" width="11" height="11"><path fill="#333" stroke="#333" stroke-width="1.2" stroke-linejoin="round" d="M9.26 3.85L9.49 0.78L14.51 0.78L14.74 3.85L17.69 5.55L20.47 4.22L22.97 8.56L20.43 10.30L20.43 13.70L22.97 15.44L20.47 19.78L17.69 18.45L14.74 20.15L14.51 23.22L9.49 23.22L9.26 20.15L6.31 18.45L3.53 19.78L1.03 15.44L3.57 13.70L3.57 10.30L1.03 8.56L3.53 4.22L6.31 5.55Z"/><circle cx="12" cy="12" r="3.8" fill="#fff"/></svg></div>
<div class="t" style="left:142.9px;top:292.1px;color:#555">F.WorkflowConfig.MAM.Simple12</div>
<div class="a" style="left:110.7px;top:317.5px"><svg viewBox="0 0 7 10.5" width="7" height="10.5"><path d="M0.5 0.2L6.5 5.25L0.5 10.3z" fill="#2a2a2a"/></svg></div>
<div class="a" style="left:125.2px;top:317.3px"><svg class="gear" viewBox="0 0 24 24" width="11" height="11"><path fill="#333" stroke="#333" stroke-width="1.2" stroke-linejoin="round" d="M9.26 3.85L9.49 0.78L14.51 0.78L14.74 3.85L17.69 5.55L20.47 4.22L22.97 8.56L20.43 10.30L20.43 13.70L22.97 15.44L20.47 19.78L17.69 18.45L14.74 20.15L14.51 23.22L9.49 23.22L9.26 20.15L6.31 18.45L3.53 19.78L1.03 15.44L3.57 13.70L3.57 10.30L1.03 8.56L3.53 4.22L6.31 5.55Z"/><circle cx="12" cy="12" r="3.8" fill="#fff"/></svg></div>
<div class="t" style="left:142.9px;top:315.3px;color:#555">F.WorkflowConfig.PIM2</div>
<div class="a" style="left:110.7px;top:340.8px"><svg viewBox="0 0 7 10.5" width="7" height="10.5"><path d="M0.5 0.2L6.5 5.25L0.5 10.3z" fill="#2a2a2a"/></svg></div>
<div class="a" style="left:125.2px;top:340.6px"><svg class="gear" viewBox="0 0 24 24" width="11" height="11"><path fill="#333" stroke="#333" stroke-width="1.2" stroke-linejoin="round" d="M9.26 3.85L9.49 0.78L14.51 0.78L14.74 3.85L17.69 5.55L20.47 4.22L22.97 8.56L20.43 10.30L20.43 13.70L22.97 15.44L20.47 19.78L17.69 18.45L14.74 20.15L14.51 23.22L9.49 23.22L9.26 20.15L6.31 18.45L3.53 19.78L1.03 15.44L3.57 13.70L3.57 10.30L1.03 8.56L3.53 4.22L6.31 5.55Z"/><circle cx="12" cy="12" r="3.8" fill="#fff"/></svg></div>
<div class="t" style="left:142.9px;top:338.6px;color:#555">F.WorkflowConfig.selected.file</div>
<div class="a" style="left:110.7px;top:364.0px"><svg viewBox="0 0 7 10.5" width="7" height="10.5"><path d="M0.5 0.2L6.5 5.25L0.5 10.3z" fill="#2a2a2a"/></svg></div>
<div class="a" style="left:125.2px;top:363.8px"><svg class="gear" viewBox="0 0 24 24" width="11" height="11"><path fill="#333" stroke="#333" stroke-width="1.2" stroke-linejoin="round" d="M9.26 3.85L9.49 0.78L14.51 0.78L14.74 3.85L17.69 5.55L20.47 4.22L22.97 8.56L20.43 10.30L20.43 13.70L22.97 15.44L20.47 19.78L17.69 18.45L14.74 20.15L14.51 23.22L9.49 23.22L9.26 20.15L6.31 18.45L3.53 19.78L1.03 15.44L3.57 13.70L3.57 10.30L1.03 8.56L3.53 4.22L6.31 5.55Z"/><circle cx="12" cy="12" r="3.8" fill="#fff"/></svg></div>
<div class="t" style="left:142.9px;top:361.8px;color:#555">F.WorkflowConfig.MAM.VV</div>
<div class="a" style="left:110.7px;top:387.2px"><svg viewBox="0 0 7 10.5" width="7" height="10.5"><path d="M0.5 0.2L6.5 5.25L0.5 10.3z" fill="#2a2a2a"/></svg></div>
<div class="a" style="left:125.2px;top:387.1px"><svg class="gear" viewBox="0 0 24 24" width="11" height="11"><path fill="#333" stroke="#333" stroke-width="1.2" stroke-linejoin="round" d="M9.26 3.85L9.49 0.78L14.51 0.78L14.74 3.85L17.69 5.55L20.47 4.22L22.97 8.56L20.43 10.30L20.43 13.70L22.97 15.44L20.47 19.78L17.69 18.45L14.74 20.15L14.51 23.22L9.49 23.22L9.26 20.15L6.31 18.45L3.53 19.78L1.03 15.44L3.57 13.70L3.57 10.30L1.03 8.56L3.53 4.22L6.31 5.55Z"/><circle cx="12" cy="12" r="3.8" fill="#fff"/></svg></div>
<div class="t" style="left:142.9px;top:385.1px;color:#555">F.WC.FileUpload</div>
<div class="a" style="left:110.7px;top:410.5px"><svg viewBox="0 0 7 10.5" width="7" height="10.5"><path d="M0.5 0.2L6.5 5.25L0.5 10.3z" fill="#2a2a2a"/></svg></div>
<div class="a" style="left:125.2px;top:410.3px"><svg class="gear" viewBox="0 0 24 24" width="11" height="11"><path fill="#333" stroke="#333" stroke-width="1.2" stroke-linejoin="round" d="M9.26 3.85L9.49 0.78L14.51 0.78L14.74 3.85L17.69 5.55L20.47 4.22L22.97 8.56L20.43 10.30L20.43 13.70L22.97 15.44L20.47 19.78L17.69 18.45L14.74 20.15L14.51 23.22L9.49 23.22L9.26 20.15L6.31 18.45L3.53 19.78L1.03 15.44L3.57 13.70L3.57 10.30L1.03 8.56L3.53 4.22L6.31 5.55Z"/><circle cx="12" cy="12" r="3.8" fill="#fff"/></svg></div>
<div class="t" style="left:142.9px;top:408.3px;color:#555">Glossary</div>
<div class="a" style="left:110.7px;top:433.8px"><svg viewBox="0 0 7 10.5" width="7" height="10.5"><path d="M0.5 0.2L6.5 5.25L0.5 10.3z" fill="#2a2a2a"/></svg></div>
<div class="a" style="left:125.2px;top:433.6px"><svg class="gear" viewBox="0 0 24 24" width="11" height="11"><path fill="#333" stroke="#333" stroke-width="1.2" stroke-linejoin="round" d="M9.26 3.85L9.49 0.78L14.51 0.78L14.74 3.85L17.69 5.55L20.47 4.22L22.97 8.56L20.43 10.30L20.43 13.70L22.97 15.44L20.47 19.78L17.69 18.45L14.74 20.15L14.51 23.22L9.49 23.22L9.26 20.15L6.31 18.45L3.53 19.78L1.03 15.44L3.57 13.70L3.57 10.30L1.03 8.56L3.53 4.22L6.31 5.55Z"/><circle cx="12" cy="12" r="3.8" fill="#fff"/></svg></div>
<div class="t" style="left:142.9px;top:431.6px;color:#555">F.WFlConfig.Glossary.OM</div>
<div class="a" style="left:110.7px;top:457.0px"><svg viewBox="0 0 7 10.5" width="7" height="10.5"><path d="M0.5 0.2L6.5 5.25L0.5 10.3z" fill="#2a2a2a"/></svg></div>
<div class="a" style="left:125.2px;top:456.8px"><svg class="gear" viewBox="0 0 24 24" width="11" height="11"><path fill="#333" stroke="#333" stroke-width="1.2" stroke-linejoin="round" d="M9.26 3.85L9.49 0.78L14.51 0.78L14.74 3.85L17.69 5.55L20.47 4.22L22.97 8.56L20.43 10.30L20.43 13.70L22.97 15.44L20.47 19.78L17.69 18.45L14.74 20.15L14.51 23.22L9.49 23.22L9.26 20.15L6.31 18.45L3.53 19.78L1.03 15.44L3.57 13.70L3.57 10.30L1.03 8.56L3.53 4.22L6.31 5.55Z"/><circle cx="12" cy="12" r="3.8" fill="#fff"/></svg></div>
<div class="t" style="left:142.9px;top:454.8px;color:#555">F.WFL.OM.Term</div>
<div class="a" style="left:110.7px;top:480.2px"><svg viewBox="0 0 7 10.5" width="7" height="10.5"><path d="M0.5 0.2L6.5 5.25L0.5 10.3z" fill="#2a2a2a"/></svg></div>
<div class="a" style="left:125.2px;top:480.1px"><svg class="gear" viewBox="0 0 24 24" width="11" height="11"><path fill="#333" stroke="#333" stroke-width="1.2" stroke-linejoin="round" d="M9.26 3.85L9.49 0.78L14.51 0.78L14.74 3.85L17.69 5.55L20.47 4.22L22.97 8.56L20.43 10.30L20.43 13.70L22.97 15.44L20.47 19.78L17.69 18.45L14.74 20.15L14.51 23.22L9.49 23.22L9.26 20.15L6.31 18.45L3.53 19.78L1.03 15.44L3.57 13.70L3.57 10.30L1.03 8.56L3.53 4.22L6.31 5.55Z"/><circle cx="12" cy="12" r="3.8" fill="#fff"/></svg></div>
<div class="t" style="left:142.9px;top:478.1px;color:#555">Glossary_forever</div>
<div class="a" style="left:110.7px;top:503.5px"><svg viewBox="0 0 7 10.5" width="7" height="10.5"><path d="M0.5 0.2L6.5 5.25L0.5 10.3z" fill="#2a2a2a"/></svg></div>
<div class="a" style="left:125.2px;top:503.3px"><svg class="gear" viewBox="0 0 24 24" width="11" height="11"><path fill="#333" stroke="#333" stroke-width="1.2" stroke-linejoin="round" d="M9.26 3.85L9.49 0.78L14.51 0.78L14.74 3.85L17.69 5.55L20.47 4.22L22.97 8.56L20.43 10.30L20.43 13.70L22.97 15.44L20.47 19.78L17.69 18.45L14.74 20.15L14.51 23.22L9.49 23.22L9.26 20.15L6.31 18.45L3.53 19.78L1.03 15.44L3.57 13.70L3.57 10.30L1.03 8.56L3.53 4.22L6.31 5.55Z"/><circle cx="12" cy="12" r="3.8" fill="#fff"/></svg></div>
<div class="a" style="left:110.7px;top:543.9px"><svg viewBox="0 0 7 10.5" width="7" height="10.5"><path d="M0.5 0.2L6.5 5.25L0.5 10.3z" fill="#2a2a2a"/></svg></div>
<div class="a" style="left:125.2px;top:543.7px"><svg class="gear" viewBox="0 0 24 24" width="11" height="11"><path fill="#333" stroke="#333" stroke-width="1.2" stroke-linejoin="round" d="M9.26 3.85L9.49 0.78L14.51 0.78L14.74 3.85L17.69 5.55L20.47 4.22L22.97 8.56L20.43 10.30L20.43 13.70L22.97 15.44L20.47 19.78L17.69 18.45L14.74 20.15L14.51 23.22L9.49 23.22L9.26 20.15L6.31 18.45L3.53 19.78L1.03 15.44L3.57 13.70L3.57 10.30L1.03 8.56L3.53 4.22L6.31 5.55Z"/><circle cx="12" cy="12" r="3.8" fill="#fff"/></svg></div>
<div class="t" style="left:142.9px;top:541.7px;color:#555">F.WC.Test</div>
<div class="a" style="left:110.7px;top:567.1px"><svg viewBox="0 0 7 10.5" width="7" height="10.5"><path d="M0.5 0.2L6.5 5.25L0.5 10.3z" fill="#2a2a2a"/></svg></div>
<div class="a" style="left:125.2px;top:566.9px"><svg class="gear" viewBox="0 0 24 24" width="11" height="11"><path fill="#333" stroke="#333" stroke-width="1.2" stroke-linejoin="round" d="M9.26 3.85L9.49 0.78L14.51 0.78L14.74 3.85L17.69 5.55L20.47 4.22L22.97 8.56L20.43 10.30L20.43 13.70L22.97 15.44L20.47 19.78L17.69 18.45L14.74 20.15L14.51 23.22L9.49 23.22L9.26 20.15L6.31 18.45L3.53 19.78L1.03 15.44L3.57 13.70L3.57 10.30L1.03 8.56L3.53 4.22L6.31 5.55Z"/><circle cx="12" cy="12" r="3.8" fill="#fff"/></svg></div>
<div class="t" style="left:142.9px;top:564.9px;color:#555">F.WC.Test.Nikitsin</div>
<svg class="a" style="left:820.5px;top:468.5px" width="13" height="20" viewBox="0 0 13 20"><path d="M0.9 0.7V15.5L4.3 12.2L6.8 18L9 17L6.6 11.3H11.3z" fill="#fff" stroke="#46525c" stroke-width="1.3" stroke-linejoin="round"/></svg>
<div class="a" style="left:0;top:696px;width:1671px;height:72px;background:linear-gradient(to bottom,rgba(0,0,0,0) 0%,rgba(0,0,0,0.06) 22%,rgba(0,0,0,0.17) 55%,rgba(0,0,0,0.32) 100%)"></div>
</body></html>
